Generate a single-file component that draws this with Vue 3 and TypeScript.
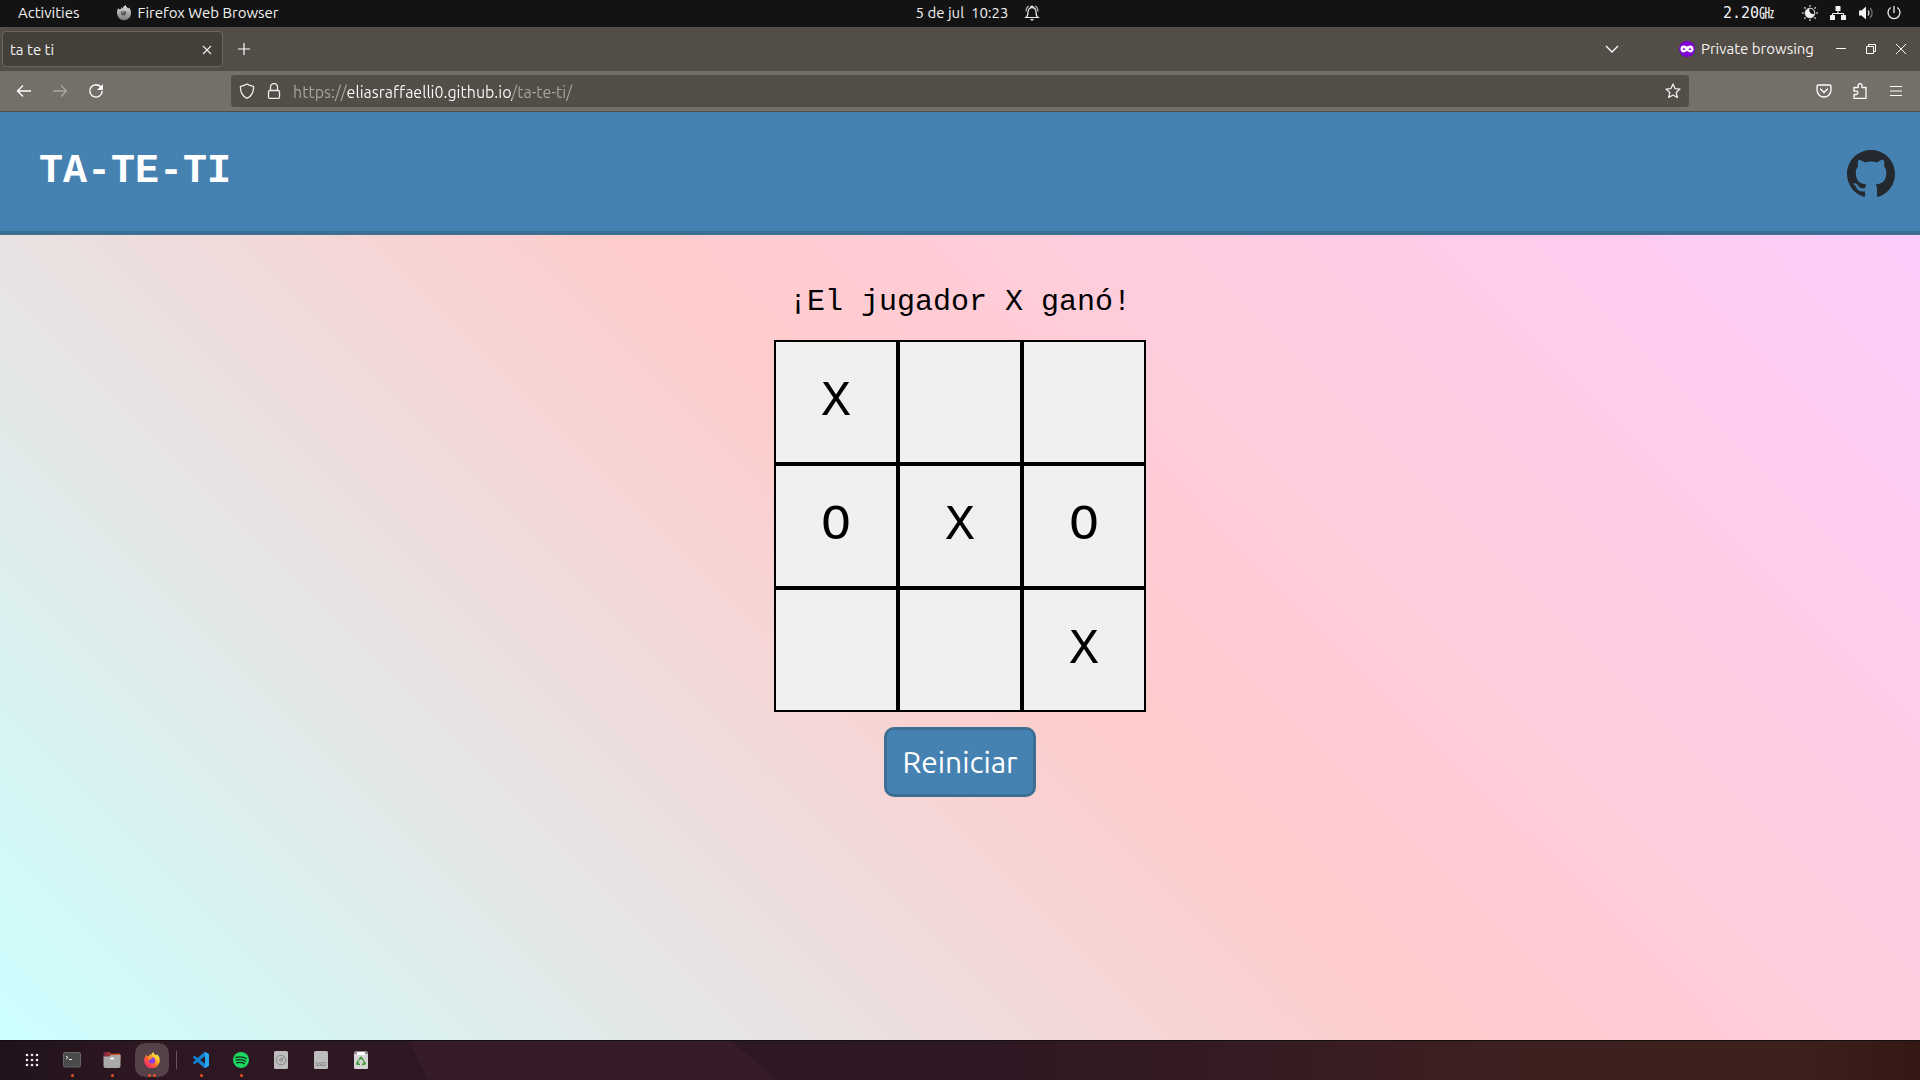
<script setup lang="ts">
import { ref } from 'vue'

type Mark = 'X' | 'O' | ''

const emptyBoard = (): Mark[] => ['', '', '', '', '', '', '', '', '']
const board = ref<Mark[]>(['X', '', '', 'O', 'X', 'O', '', '', 'X'])
const message = ref('¡El jugador X ganó!')
const turn = ref<Mark>('X')
const finished = ref(true)
const url = ref('https://eliasraffaelli0.github.io/ta-te-ti/')

const lines = [
  [0, 1, 2], [3, 4, 5], [6, 7, 8],
  [0, 3, 6], [1, 4, 7], [2, 5, 8],
  [0, 4, 8], [2, 4, 6],
]

function play(index: number) {
  if (finished.value || board.value[index]) return
  board.value[index] = turn.value
  if (lines.some((line) => line.every((i) => board.value[i] === turn.value))) {
    message.value = `¡El jugador ${turn.value} ganó!`
    finished.value = true
    return
  }
  if (board.value.every((cell) => cell)) {
    message.value = '¡Empate!'
    finished.value = true
    return
  }
  turn.value = turn.value === 'X' ? 'O' : 'X'
  message.value = `Turno del jugador ${turn.value}`
}

function restart() {
  board.value = emptyBoard()
  turn.value = 'X'
  finished.value = false
  message.value = 'Turno del jugador X'
}
</script>

<template>
  <div class="desktop">
    <header class="panel">
      <div class="panel-side">
        <button class="panel-btn activities">Activities</button>
        <button class="panel-btn app-menu">
          <svg width="16" height="16" viewBox="0 0 16 16">
            <defs>
              <linearGradient id="greyfox" x1="0" y1="0" x2="0" y2="1">
                <stop offset="0" stop-color="#e4e4e4" />
                <stop offset="1" stop-color="#777" />
              </linearGradient>
            </defs>
            <path fill="url(#greyfox)" d="M1.500 4.500 2.200 3l1 1.600 1.800-.6L5.500 2l1.300 1.700C7 2 8 .8 9.600 0c-.1 1.600 1.400 2.200 2.600 3.400L13 2.600c1.400 1.600 2 3.500 2 5.400a7 7 0 0 1-14 .6c-.1-1.500 0-3 .5-4.100z" />
            <path d="M5 6.500c1.500-1 3.500 0 5-.3.800 2.500-.6 4.300-2.600 4.300C5.500 10.500 4.500 9 5 6.500z" fill="#555" />
            <path d="M5.500 6.500h3l-1.500 1.500z" fill="#bbb" />
          </svg>
          <span>Firefox Web Browser</span>
        </button>
      </div>
      <button class="panel-btn clock">
        <span class="clock-text">5 de jul&nbsp; 10:23</span>
        <svg width="16" height="18" viewBox="0 0 16 18" fill="none" stroke="#eee" stroke-width="1.200">
          <path d="M2 13.500c1.500-1 2-2.500 2-5.500 0-2.600 1.500-4.300 4-4.300s4 1.700 4 4.300c0 3 .5 4.500 2 5.500z" />
          <path d="M6.700 3.500a1.300 1.300 0 0 1 2.600 0" />
          <path d="M2 7.500C2 5 3 3 4.800 2M14 7.500C14 5 13 3 11.200 2" stroke="#aaa" />
          <path d="M6 15h4l-2 2z" fill="#eee" stroke="none" />
        </svg>
      </button>
      <div class="panel-side right">
        <span class="freq">2.20㎓</span>
        <button class="panel-btn tray" aria-label="System menu">
          <svg width="16" height="16" viewBox="0 0 16 16">
            <path fill="#f2f2f2" d="M7.500 3.800A4.500 4.500 0 1 0 12.300 9 4 4 0 0 1 7.500 3.800z" />
            <circle cx="8" cy="8" r="4.800" fill="none" stroke="#eee" stroke-width="1" />
            <path stroke="#bbb" stroke-width="1.500" d="M8 0v1.800M8 14.200V16M0 8h1.800M14.200 8H16M2.300 2.300l1.300 1.300M12.400 12.400l1.300 1.300M2.300 13.700l1.300-1.300M12.400 3.600l1.300-1.300" />
          </svg>
          <svg width="16" height="16" viewBox="0 0 16 16" fill="#f2f2f2">
            <rect x="5.500" y="1" width="5" height="5" rx=".6" />
            <rect x="0" y="10" width="5" height="5" rx=".6" />
            <rect x="11" y="10" width="5" height="5" rx=".6" />
            <path fill="none" stroke="#f2f2f2" d="M8 6v2.500M2.500 10V8.500h11V10" />
          </svg>
          <svg width="16" height="16" viewBox="0 0 16 16">
            <path fill="#f2f2f2" d="M1 5.500h2.500L8 1.500v13l-4.500-4H1z" />
            <path fill="none" stroke="#ccc" stroke-width="1.300" d="M10 5.500a4 4 0 0 1 0 5" />
            <path fill="none" stroke="#777" stroke-width="1.300" d="M12 3a7 7 0 0 1 0 10" />
          </svg>
          <svg width="16" height="16" viewBox="0 0 16 16" fill="none" stroke="#eee" stroke-width="1.300">
            <path d="M4.800 2.500a6 6 0 1 0 6.400 0M8 1v7" />
          </svg>
        </button>
      </div>
    </header>

    <nav class="tabs" aria-label="Tabs">
      <div class="tab">
        <span>ta te ti</span>
        <button class="icon-btn small" aria-label="Close tab">
          <svg width="10" height="10" viewBox="0 0 10 10" stroke="#eee" stroke-width="1.100"><path d="M1 1l8 8M9 1L1 9" /></svg>
        </button>
      </div>
      <button class="icon-btn" aria-label="New tab">
        <svg width="12" height="12" viewBox="0 0 12 12" stroke="#fff" stroke-width="1.200"><path d="M6 0v12M0 6h12" /></svg>
      </button>
      <div class="spacer"></div>
      <button class="icon-btn" aria-label="List all tabs">
        <svg width="14" height="14" viewBox="0 0 14 14" fill="none" stroke="#fff" stroke-width="1.300"><path d="M1 4l6 6 6-6" /></svg>
      </button>
      <div class="private">
        <svg width="16" height="16" viewBox="0 0 16 16">
          <circle cx="8" cy="8" r="8" fill="#8000d7" />
          <path fill="#fff" fill-rule="evenodd" d="M4.500 4.500C6 4.500 7 5.300 8 5.300s2-.8 3.500-.8c2 0 3 1.600 3 3.500s-1.200 3.500-3 3.500c-1.700 0-2.500-1.600-3.500-1.600s-1.800 1.600-3.500 1.600c-1.800 0-3-1.600-3-3.500s1-3.500 3-3.500zM3.300 8.200c.8 1 2.400 1 3.200 0-.8-1.200-2.400-1.200-3.200 0zm6.200 0c.8 1 2.400 1 3.200 0-.8-1.200-2.400-1.200-3.200 0z" />
        </svg>
        <span>Private browsing</span>
      </div>
      <button class="win-btn" aria-label="Minimize">
        <svg width="10" height="12" viewBox="0 0 10 12" stroke="#fff"><path d="M0 5.500h10" /></svg>
      </button>
      <button class="win-btn" aria-label="Restore">
        <svg width="10" height="10" viewBox="0 0 10 10" fill="none" stroke="#fff"><path d="M.5 2.500h7v7h-7zM2.500 2.500v-2h7v7h-2" /></svg>
      </button>
      <button class="win-btn" aria-label="Close">
        <svg width="10" height="10" viewBox="0 0 10 10" stroke="#fff"><path d="M0 0l10 10M10 0L0 10" /></svg>
      </button>
    </nav>

    <div class="toolbar">
      <div class="tool-side">
        <button class="icon-btn" aria-label="Back">
          <svg width="16" height="16" viewBox="0 0 16 16" fill="none" stroke="#fff" stroke-width="1.300"><path d="M15 8H2M7 2.500L1.500 8 7 13.500" /></svg>
        </button>
        <button class="icon-btn" aria-label="Forward" disabled>
          <svg width="16" height="16" viewBox="0 0 16 16" fill="none" stroke="#aba8a3" stroke-width="1.300"><path d="M1 8h13M9 2.500L14.500 8 9 13.500" /></svg>
        </button>
        <button class="icon-btn" aria-label="Reload">
          <svg width="16" height="16" viewBox="0 0 16 16" fill="none" stroke="#fff" stroke-width="1.400"><path d="M13.200 4.500A6.200 6.200 0 1 0 14.200 8" /><path fill="#fff" stroke="none" d="M15 1v6H9z" /></svg>
        </button>
      </div>
      <label class="urlbar">
        <svg width="16" height="16" viewBox="0 0 16 16" fill="none" stroke="#eee" stroke-width="1.300"><path d="M8 1C6 2.500 3.500 3 1.500 3.300 1 8.500 3.500 13.500 8 15.300c4.500-1.800 7-6.800 6.500-12C12.500 3 10 2.500 8 1z" stroke-linejoin="round" /></svg>
        <svg width="16" height="16" viewBox="0 0 16 16" fill="none" stroke="#eee" stroke-width="1.300"><rect x="2.500" y="7.500" width="11" height="8" rx="1.500" /><path d="M4.500 7.500V4a3.500 3.500 0 0 1 7 0v3.500" /></svg>
        <input v-model="url" class="url" type="text" aria-label="Address" spellcheck="false" />
        <svg width="16" height="16" viewBox="0 0 16 16" fill="none" stroke="#eee" stroke-width="1.300" stroke-linejoin="round"><path d="M8 1l2 4.600 5 .5-3.800 3.400 1.100 5L8 12l-4.300 2.500 1.100-5L1 6.100l5-.5z" /></svg>
      </label>
      <div class="tool-side right">
        <button class="icon-btn" aria-label="Save to Pocket">
          <svg width="16" height="16" viewBox="0 0 16 16" fill="none" stroke="#fff" stroke-width="1.300"><path d="M2.500 2h11a1.500 1.500 0 0 1 1.500 1.500V7A7 7 0 0 1 1 7V3.500A1.500 1.500 0 0 1 2.500 2z" /><path d="M4.500 6L8 9.500 11.500 6" stroke-linecap="round" /></svg>
        </button>
        <button class="icon-btn" aria-label="Extensions">
          <svg width="16" height="16" viewBox="0 0 16 16" fill="none" stroke="#fff" stroke-width="1.300" stroke-linejoin="round"><path d="M6.200 4.500V2.600a1.900 1.900 0 0 1 3.800 0v1.900h4v11H2v-4h2.200a1.600 1.600 0 0 0 0-3.300H2V4.500z" /></svg>
        </button>
        <button class="icon-btn" aria-label="Application menu">
          <svg width="12" height="12" viewBox="0 0 12 12" stroke="#fff" stroke-width="1.200"><path d="M0 1.500h12M0 6h12M0 10.500h12" /></svg>
        </button>
      </div>
    </div>

    <div class="page">
      <header class="site-header">
        <h1>TA-TE-TI</h1>
        <a class="github" href="https://github.com/" aria-label="GitHub">
          <svg width="48" height="48" viewBox="0 0 16 16" fill="#24292f">
            <path d="M8 0C3.580 0 0 3.580 0 8c0 3.540 2.290 6.530 5.470 7.590.4.070.55-.17.55-.38 0-.19-.01-.82-.01-1.490-2.010.37-2.530-.49-2.690-.94-.09-.23-.48-.94-.82-1.130-.28-.15-.68-.52-.01-.53.63-.01 1.080.58 1.230.82.72 1.210 1.870.87 2.330.66.07-.52.28-.87.51-1.070-1.780-.2-3.640-.89-3.640-3.950 0-.87.31-1.590.82-2.150-.08-.2-.36-1.020.08-2.120 0 0 .67-.21 2.200.82.64-.18 1.320-.27 2-.27s1.360.09 2 .27c1.530-1.040 2.200-.82 2.200-.82.44 1.100.16 1.920.08 2.120.51.56.82 1.270.82 2.150 0 3.070-1.870 3.750-3.650 3.950.29.25.54.73.54 1.480 0 1.070-.01 1.930-.01 2.200 0 .21.15.46.55.38A8.010 8.010 0 0 0 16 8c0-4.420-3.580-8-8-8z" />
          </svg>
        </a>
      </header>
      <main class="game">
        <p class="message">{{ message }}</p>
        <div class="board">
          <button v-for="(cell, i) in board" :key="i" class="cell" :aria-label="`Casilla ${i + 1} ${cell}`" @click="play(i)">{{ cell }}</button>
        </div>
        <button class="restart" @click="restart">Reiniciar</button>
      </main>
    </div>

    <footer class="dock">
      <svg class="dock-art" width="400" height="40" viewBox="0 0 400 40"><path d="M9 0h322l48 40H29z" fill="#361c29" /></svg>
      <button class="dock-btn" aria-label="Show applications">
        <svg width="16" height="16" viewBox="0 0 16 16" fill="#eee">
          <template v-for="r in 3" :key="r"><circle v-for="c in 3" :key="c" :cx="c * 5 - 2" :cy="r * 5 - 2" r="1.300" /></template>
        </svg>
      </button>
      <button class="dock-btn" aria-label="Terminal">
        <svg width="18" height="16" viewBox="0 0 18 16">
          <rect x=".5" y=".5" width="17" height="14.500" rx="1.500" fill="#4a4a4a" stroke="#666" />
          <path d="M3 4l2 1.500L3 7M6 7.500h3" fill="none" stroke="#eee" />
        </svg>
        <i class="dots"><b></b></i>
      </button>
      <button class="dock-btn" aria-label="Files">
        <svg width="18" height="16" viewBox="0 0 18 16">
          <defs><linearGradient id="folder"><stop offset="0" stop-color="#7d2440" /><stop offset="1" stop-color="#e95420" /></linearGradient></defs>
          <path d="M.5 2Q.5 0 2 0h4.500l1.500 1.500h8q1.500 0 1.500 2V8H.5z" fill="url(#folder)" />
          <path d="M.5 4.500H6L8 3h9.500v11q0 2-2 2h-13q-2 0-2-2z" fill="#a9a9a9" />
          <path d="M7 6.500h4" stroke="#fff" stroke-width="1.500" />
        </svg>
        <i class="dots"><b></b></i>
      </button>
      <button class="dock-btn active" aria-label="Firefox">
        <svg width="16" height="16" viewBox="0 0 16 16">
          <defs>
            <linearGradient id="fox" x1=".9" y1=".1" x2=".2" y2=".9">
              <stop offset="0" stop-color="#fff44f" /><stop offset=".35" stop-color="#ffbd2a" />
              <stop offset=".6" stop-color="#ff6a2b" /><stop offset="1" stop-color="#ff2a6a" />
            </linearGradient>
          </defs>
          <path fill="url(#fox)" d="M1.200 4.500 2.200 2.400l1 2 1.800-.6L6 2l1 1.700C7.200 2 8 .8 9.600 0c-.1 1.600 1.400 2.200 2.600 3.400L13 2.200c1.800 1.700 2.800 3.800 2.800 6A7.800 7.800 0 0 1 .2 8.700c-.1-1.500.3-3 1-4.200z" />
          <circle cx="8" cy="8.400" r="3.200" fill="#8b3fe8" />
          <path d="M4 5.500c1.500-1 3 .2 4.600.2L7 7.300l-2 .8z" fill="#ff9020" />
        </svg>
        <i class="dots"><b></b><b></b></i>
      </button>
      <span class="separator"></span>
      <button class="dock-btn" aria-label="Visual Studio Code">
        <svg width="16" height="16" viewBox="0 0 24 24">
          <path fill="#1283cf" d="M23.150 2.587L18.210.21a1.494 1.494 0 0 0-1.705.29l-9.460 8.630-4.120-3.128a.999.999 0 0 0-1.276.057L.327 7.261A1 1 0 0 0 .326 8.740L3.899 12 .326 15.260a1 1 0 0 0 .001 1.479L1.650 17.940a.999.999 0 0 0 1.276.057l4.120-3.128 9.460 8.630a1.492 1.492 0 0 0 1.704.29l4.942-2.377A1.500 1.500 0 0 0 24 20.060V3.939a1.500 1.500 0 0 0-.85-1.352zm-5.146 14.861L10.826 12l7.178-5.448v10.896z" />
          <path fill="#2aa5f0" d="M18 0l5.200 2.600q.8.500.8 1.400v16q0 1-.8 1.400L18 24z" />
        </svg>
        <i class="dots"><b></b></i>
      </button>
      <button class="dock-btn" aria-label="Spotify">
        <svg width="16" height="16" viewBox="0 0 16 16">
          <circle cx="8" cy="8" r="8" fill="#1ed760" />
          <path d="M3 5.500q5.500-1.600 10.200 1M3.300 8.200q5-1.400 9 .9M3.800 10.700q4.200-1 7.600.9" fill="none" stroke="#10301c" stroke-width="1.400" stroke-linecap="round" />
        </svg>
        <i class="dots"><b></b></i>
      </button>
      <button class="dock-btn" aria-label="Disk">
        <svg width="14" height="18" viewBox="0 0 14 18">
          <rect width="14" height="18" rx="1.500" fill="#bdbdbd" />
          <circle cx="7" cy="9" r="4.800" fill="none" stroke="#8a8a8a" />
          <circle cx="7" cy="9" r="1.500" fill="none" stroke="#8a8a8a" />
          <path d="M7 9l3.500-4" stroke="#8a8a8a" />
        </svg>
      </button>
      <button class="dock-btn" aria-label="SSD">
        <svg width="14" height="18" viewBox="0 0 14 18">
          <rect width="14" height="18" rx="1.500" fill="#bdbdbd" />
          <text x="7" y="15" class="ssd" text-anchor="middle">SSD</text>
        </svg>
      </button>
      <button class="dock-btn" aria-label="Trash">
        <svg width="14" height="18" viewBox="0 0 14 18">
          <rect y="1" width="14" height="17" rx="1.500" fill="#d5d5d5" />
          <path d="M0 2q0-2 2-2h10q2 0 2 2v1H0z" fill="#8d8d8d" />
          <path d="M3 1h8v3H3z" fill="#fff" />
          <path d="M4.800 9L7 6.500 9.200 9M9.600 9.500l1.400 3.300-3 .8M6 13.500l-3-.6 1.200-3.200" fill="none" stroke="#3c9a35" stroke-width="1.700" />
        </svg>
      </button>
    </footer>
  </div>
</template>

<style>
body {
  margin: 0;
}
</style>

<style scoped>
.desktop {
  display: flex;
  flex-direction: column;
  min-height: 100vh;
  font-family: Ubuntu, "Noto Sans", sans-serif;
  font-size: 15px;
  line-height: 20px;
  color: #f2f2f2;
}

svg {
  display: block;
  flex: none;
}

button {
  display: flex;
  align-items: center;
  justify-content: center;
  padding: 0;
  border: 0;
  background: none;
  color: inherit;
  font: inherit;
}

.panel {
  display: flex;
  align-items: center;
  box-sizing: border-box;
  height: 27px;
  padding-bottom: 1px;
  background: #131313;
}

.panel-side {
  display: flex;
  flex: 1;
}

.panel-side.right {
  justify-content: flex-end;
  align-items: center;
}

.activities {
  margin-left: 18px;
}

.app-menu {
  gap: 6px;
  margin-left: 36px;
}

.clock {
  gap: 16px;
  margin-left: 36px;
}

.freq {
  margin-right: 28px;
  font-family: "DejaVu Sans Mono", "Noto Sans CJK JP", monospace;
}

.tray {
  gap: 12px;
  margin-right: 18px;
}

.tabs {
  display: flex;
  align-items: center;
  height: 44px;
  background: #524d46;
}

.tab {
  display: flex;
  align-items: center;
  justify-content: space-between;
  box-sizing: border-box;
  width: 221px;
  height: 36px;
  margin-left: 2px;
  padding: 1px 4px 0 7px;
  border: 1px solid #6b675d;
  border-radius: 4px;
  background: #43403a;
}

.icon-btn {
  width: 36px;
  height: 32px;
}

.icon-btn.small {
  width: 22px;
}

.tab + .icon-btn {
  margin-left: 3px;
}

.spacer {
  flex: 1;
}

.private {
  display: flex;
  align-items: center;
  gap: 6px;
  margin: 0 12px 0 49px;
}

.win-btn {
  width: 30px;
  height: 30px;
}

.win-btn:last-child {
  margin-right: 4px;
}

.toolbar {
  display: flex;
  align-items: center;
  height: 40px;
  border-bottom: 1px solid #524d46;
  background: #746f68;
}

.tool-side {
  display: flex;
  box-sizing: border-box;
  width: 231px;
  padding: 0 6px;
}

.tool-side.right {
  justify-content: flex-end;
}

.urlbar {
  display: flex;
  flex: 1;
  align-items: center;
  gap: 11px;
  height: 32px;
  padding: 0 8px;
  border-radius: 4px;
  background: #524d46;
}

.url {
  flex: 1;
  min-width: 0;
  height: 24px;
  padding: 1px 0 0;
  border: 0;
  outline: 0;
  background: linear-gradient(90deg, #aaa7a2 54px, #fff 54px, #fff 219px, #aaa7a2 219px);
  background-clip: text;
  -webkit-background-clip: text;
  color: transparent;
  font: inherit;
  font-size: 16px;
}

.page {
  display: flex;
  flex: 1;
  flex-direction: column;
  background: linear-gradient(45deg, #ccffff, #ffcccc, #ffccff);
}

.site-header {
  display: flex;
  align-items: center;
  justify-content: space-between;
  height: 119px;
  padding: 0 25px 0 39px;
  border-bottom: 4px solid #3d6e93;
  background: #4682b1;
}

h1 {
  margin: 0;
  color: #fff;
  font: bold 40px/46px "Liberation Mono", monospace;
}

.github {
  padding-top: 4px;
}

.game {
  display: flex;
  flex-direction: column;
  align-items: center;
  padding: 50px 0;
}

.message {
  margin: 0 0 21px;
  color: #000;
  font: 30px/34px "Liberation Mono", monospace;
}

.board {
  display: grid;
  grid-template-columns: repeat(3, 124px);
  grid-auto-rows: 124px;
}

.cell {
  border: 2px solid #000;
  background: #f0f0f0;
  color: #000;
  font: 50px/56px "Liberation Mono", monospace;
}

.restart {
  box-sizing: border-box;
  min-width: 152px;
  height: 70px;
  margin-top: 15px;
  padding: 0 12px;
  border: 3px solid #3d6e93;
  border-radius: 10px;
  background: #4682b1;
  color: #fff;
  font-size: 30px;
}

.dock {
  position: relative;
  display: flex;
  align-items: center;
  box-sizing: border-box;
  height: 40px;
  padding: 0 0 2px 12px;
  border-top: 1px solid #141012;
  background: linear-gradient(90deg, #20121a, #2c1722 130px, #2e1823 50%, #351b22 65%, #3e201f 80%, #3e201c 93%, #351813);
}

.dock-art {
  position: absolute;
  top: 0;
  left: 400px;
}

.dock-btn {
  position: relative;
  width: 40px;
  height: 36px;
}

.dock-btn.active {
  width: 34px;
  height: 34px;
  margin: 0 3px;
  border-radius: 10px;
  background: #544248;
}

.separator {
  width: 1px;
  height: 18px;
  margin: 0 4px;
  background: #67565d;
}

.dots {
  position: absolute;
  right: 0;
  bottom: 1px;
  left: 0;
  display: flex;
  justify-content: center;
  gap: 2px;
}

.active .dots {
  bottom: 0;
}

.dots b {
  width: 3px;
  height: 3px;
  border-radius: 50%;
  background: #e95420;
}

.ssd {
  fill: #777;
  font: 6px "Noto Sans", sans-serif;
}
</style>
